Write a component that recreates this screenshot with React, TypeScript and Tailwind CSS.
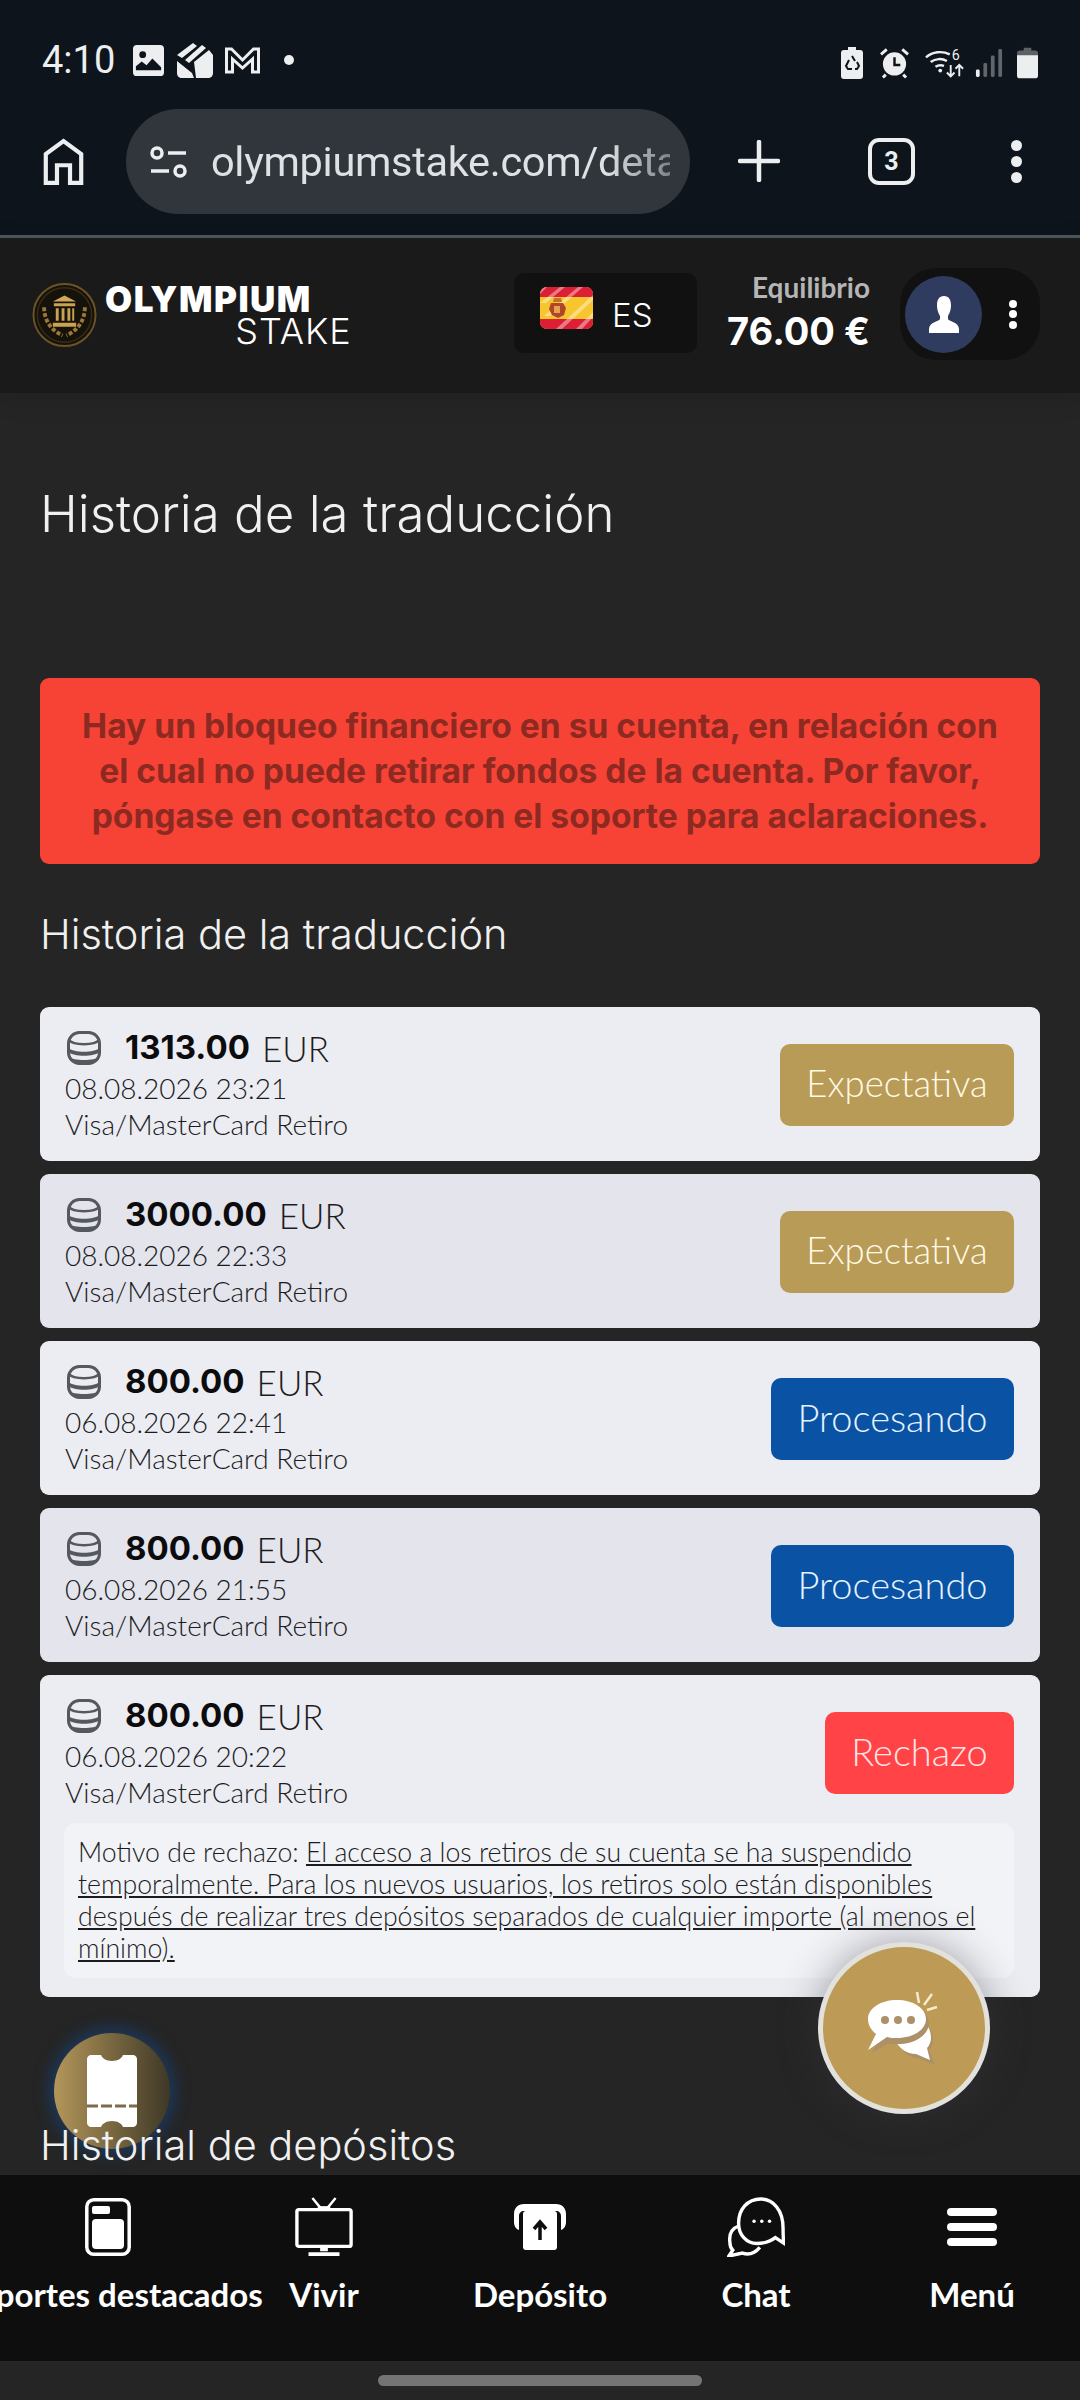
const INTER = "font-['Inter',sans-serif]";

type Withdrawal = {
  amount: string;
  date: string;
  status: string;
  statusClass: string;
  striped?: boolean;
  reason?: string;
};

const pending = "w-[234px] bg-[#b99b58] text-[36.5px] text-[#fff9e6]";
const processing = "w-[243px] bg-[#0a52a3] text-[38px] text-[#e6f2ff]";
const rejected = "w-[189px] bg-[#ff4347] text-[38px] text-[#ffe6e6]";

const withdrawals: Withdrawal[] = [
  { amount: "1313.00", date: "08.08.2026 23:21", status: "Expectativa", statusClass: pending },
  { amount: "3000.00", date: "08.08.2026 22:33", status: "Expectativa", statusClass: pending, striped: true },
  { amount: "800.00", date: "06.08.2026 22:41", status: "Procesando", statusClass: processing },
  { amount: "800.00", date: "06.08.2026 21:55", status: "Procesando", statusClass: processing, striped: true },
  {
    amount: "800.00",
    date: "06.08.2026 20:22",
    status: "Rechazo",
    statusClass: rejected,
    reason:
      "El acceso a los retiros de su cuenta se ha suspendido temporalmente. Para los nuevos usuarios, los retiros solo están disponibles después de realizar tres depósitos separados de cualquier importe (al menos el mínimo).",
  },
];

function CoinsIcon() {
  return (
    <svg viewBox="0 0 34 34" className="h-[34px] w-[34px] text-[#55585e]" fill="none">
      <rect x="1.500" y="1.500" width="31" height="31" rx="11" stroke="currentColor" strokeWidth="3" />
      <path d="M2 9c4 5.500 26 5.500 30 0" stroke="currentColor" strokeWidth="2.500" />
      <path d="M2 17c4 5 26 5 30 0v4c-4 5-26 5-30 0Z" fill="currentColor" />
      <path d="M2 26c4 4 26 4 30 0v2c-3 4-8 5-15 5s-12-1-15-5Z" fill="currentColor" />
    </svg>
  );
}

function HistoryCard({ item }: { item: Withdrawal }) {
  return (
    <div className={`rounded-[9px] pl-[24px] pr-[26px] pt-[20px] pb-[19px] ${item.striped ? "bg-[#e3e4ec]" : "bg-[#ecedf2]"}`}>
      <div className="flex items-center justify-between">
        <div className="ml-[1px] text-[#1c1c1e]">
          <div className="flex h-[42px] items-center">
            <span className="ml-[2px] mr-[24px]">
              <CoinsIcon />
            </span>
            <span className={`text-[33px] font-bold text-[#0c0c0e] ${INTER}`}>{item.amount}</span>
            <span className="ml-[12px] text-[35px] font-light">EUR</span>
          </div>
          <div className="mt-[1px] text-[28px] font-light leading-[36px]">{item.date}</div>
          <div className="text-[28px] font-light leading-[36px]">Visa/MasterCard Retiro</div>
        </div>
        <div className={`flex h-[82px] items-center justify-center rounded-[10px] pb-[2px] font-light ${item.statusClass}`}>
          {item.status}
        </div>
      </div>
      {item.reason && (
        <div className="mt-[13px] rounded-[12px] bg-[#f2f3f7] pl-[14px] pr-[12px] pt-[13px] pb-[14px] text-[26.7px] font-light leading-[32px] text-[#1c1c1e]">
          Motivo de rechazo: <span className="underline">{item.reason}</span>
        </div>
      )}
    </div>
  );
}

function StatusBar() {
  return (
    <div className="flex h-[92px] items-end justify-between pb-[13px] pl-[42px] pr-[42px] text-[#eceef0]">
      <div className="flex items-center">
        <span className="text-[38px] leading-none font-['Roboto',sans-serif]">4:10</span>
        {/* notification icons */}
        <svg viewBox="0 0 32 32" className="ml-[18px] h-[31px] w-[31px]">
          <rect width="32" height="32" rx="4" fill="currentColor" />
          <circle cx="10" cy="10" r="3.500" fill="#0d141b" />
          <path d="M3 26v-4l6-5 5 4 6-7 9 9v3Z" fill="#0d141b" />
        </svg>
        <svg viewBox="0 0 36 36" className="ml-[13px] h-[36px] w-[36px]">
          <path d="M0 13 16 1l4 3L5 16Zm8 5L25 3l4 3L12 21Zm9 2L32 8l4 5v18c0 3-2 5-5 5H19Zm-17-1 15 12 2 5H5c-3 0-5-2-5-5Z" fill="currentColor" />
        </svg>
        <svg viewBox="0 0 36 28" className="ml-[11px] h-[28px] w-[37px]" fill="none" stroke="currentColor" strokeWidth="3">
          <path d="M2 26V3h5l11 11L29 3h5v23h-6V13L18 22 8 13v13Z" />
        </svg>
        <span className="ml-[23px] h-[10px] w-[10px] rounded-full bg-current" />
      </div>
      <div className="flex items-center">
        <svg viewBox="0 0 22 32" className="h-[32px] w-[22px]">
          <path d="M7 0h8v3h4a3 3 0 0 1 3 3v23a3 3 0 0 1-3 3H3a3 3 0 0 1-3-3V6a3 3 0 0 1 3-3h4Z" fill="currentColor" />
          <path d="M11 9l3 5M8 13l-3 6 2 3h4M14 22h2l2-3-2-4" stroke="#0d141b" strokeWidth="2" fill="none" />
        </svg>
        <svg viewBox="0 0 30 32" className="ml-[17px] h-[32px] w-[29px]">
          <circle cx="15" cy="17" r="12" fill="currentColor" />
          <path d="M15 10v8h6" stroke="#0d141b" strokeWidth="2.500" fill="none" />
          <path d="M1 7l6-5M29 7l-6-5M6 28l-3 3M24 28l3 3" stroke="currentColor" strokeWidth="3" />
        </svg>
        <svg viewBox="0 0 42 32" className="ml-[16px] h-[32px] w-[40px]" fill="none" stroke="currentColor" strokeWidth="2.500">
          <path d="M1 10c7-6 17-7 25-3M6 15c5-4 12-4 17-1M11 20c3-2 6-2 9-1" />
          <circle cx="16" cy="24" r="2" fill="currentColor" stroke="none" />
          <text x="28" y="13" fontSize="15" fill="currentColor" stroke="none" className="font-['Roboto',sans-serif]">6</text>
          <path d="M27 18v12M23 26l4 4 4-4M36 30V18M32 22l4-4 4 4" strokeWidth="2" />
        </svg>
        <svg viewBox="0 0 30 32" className="ml-[10px] h-[32px] w-[28px]">
          <rect x="1" y="23" width="4" height="8" rx="1.500" fill="#eceef0" />
          <rect x="9" y="16" width="4" height="15" rx="1.500" fill="#60666b" />
          <rect x="17" y="8" width="4" height="23" rx="1.500" fill="#60666b" />
          <rect x="25" y="1" width="4" height="30" rx="1.500" fill="#60666b" />
        </svg>
        <svg viewBox="0 0 22 32" className="ml-[14px] h-[32px] w-[21px]">
          <path d="M7 0h8v3h4a3 3 0 0 1 3 3v4H0V6a3 3 0 0 1 3-3h4Z" fill="#5d6266" />
          <path d="M0 8h22v21a3 3 0 0 1-3 3H3a3 3 0 0 1-3-3Z" fill="currentColor" />
        </svg>
      </div>
    </div>
  );
}

function BrowserBar() {
  return (
    <div className="flex h-[143px] items-start pt-[17px] text-[#eceef0]">
      <svg viewBox="0 0 44 50" className="ml-[43px] mt-[29px] h-[47px] w-[41px]" fill="none" stroke="currentColor" strokeWidth="4.500">
        <path d="M3 48V17L22 3l19 14v31H29V29H15v19Z" />
      </svg>
      <div className="ml-[42px] flex h-[105px] w-[564px] items-center rounded-full bg-[#30363c] pl-[24px]">
        <svg viewBox="0 0 37 32" className="h-[32px] w-[37px] shrink-0" fill="none" stroke="currentColor" strokeWidth="3.500">
          <circle cx="7" cy="7" r="5" />
          <path d="M18 7h18M1 25h18" />
          <circle cx="30" cy="25" r="5" />
        </svg>
        <div className="ml-[24px] w-[459px] overflow-hidden whitespace-nowrap text-[41.5px] tracking-[-0.3px] font-['Roboto',sans-serif] leading-[50px] text-[#dfe2e4] [mask-image:linear-gradient(90deg,#000_86%,rgba(0,0,0,0.45))]">
          olympiumstake.com/details
        </div>
      </div>
      <svg viewBox="0 0 42 42" className="ml-[48px] mt-[31px] h-[42px] w-[42px]" stroke="currentColor" strokeWidth="4.500" strokeLinecap="round">
        <path d="M21 2v38M2 21h38" />
      </svg>
      <div className="ml-[88px] mt-[29px] flex h-[47px] w-[47px] items-center justify-center rounded-[11px] border-[4px] border-[#eceef0] text-[25px] font-bold font-['Roboto',sans-serif]">
        3
      </div>
      <div className="ml-[96px] mt-[31px] flex h-[43px] flex-col justify-between">
        <span className="h-[11px] w-[11px] rounded-full bg-current" />
        <span className="h-[11px] w-[11px] rounded-full bg-current" />
        <span className="h-[11px] w-[11px] rounded-full bg-current" />
      </div>
    </div>
  );
}

function SpainFlag() {
  return (
    <svg viewBox="0 0 53 42" className="h-[42px] w-[53px] rounded-[7px]">
      <rect width="53" height="42" fill="#f7c52e" />
      <rect width="53" height="10" fill="#dc1f35" />
      <rect y="32" width="53" height="10" fill="#dc1f35" />
      {/* glossy diagonal sheen over the stripes */}
      <g fill="#ffffff" opacity="0.4">
        <path d="M2 0h5L0 7V2ZM20 0h5L6 16H0ZM38 0h5L10 29H4ZM53 8v5L22 42h-6ZM53 25v5L42 42h-6Z" />
      </g>
      <g fill="#b0452a">
        <path d="M11 16h12l3 5-2 7-6 3-6-3-3-6Z" />
      </g>
      <path d="M14 11h7l1 4H13Z" fill="#c9702f" />
      <path d="M14 19h6v7h-6Z" fill="#e7a24d" />
    </svg>
  );
}

function SiteHeader() {
  return (
    <div className="relative flex h-[158px] items-start justify-between border-t-[3px] border-[#4b5358] bg-[#1a1a1a] pl-[32px] pr-[40px] text-white shadow-[0_6px_24px_rgba(0,0,0,0.12)]">
      <div className="mt-[45px] flex">
        <svg viewBox="0 0 66 66" className="h-[64px] w-[65px]">
          <circle cx="33" cy="33" r="32" fill="#15110b" stroke="#6c5326" strokeWidth="2" />
          <circle cx="33" cy="33" r="28" fill="none" stroke="#3a2c14" strokeWidth="1.500" />
          <path d="M21 19l12-6 12 6Z" fill="#d0a957" />
          <path d="M22 21h22v3H22ZM24 26h3v13h-3ZM30 26h3v13h-3ZM36 26h3v13h-3ZM41 26h2v13h-2ZM21 41h24v4H21Z" fill="#c9a252" />
          <path d="M12 25c0 13 7 24 19 29M54 25c0 13-7 24-19 29" stroke="#9a7937" strokeWidth="4" fill="none" strokeDasharray="4 2" />
        </svg>
        <div className="ml-[8px] mt-[-3px]">
          <div className={`text-[35px] font-black leading-[38px] tracking-[1.5px] ${INTER}`}>OLYMPIUM</div>
          <div className={`mr-[-40px] mt-[-6px] text-right text-[36px] font-light leading-[38px] tracking-[1px] ${INTER}`}>STAKE</div>
        </div>
      </div>
      <div className="flex">
        <div className="mt-[35px] flex h-[80px] w-[183px] items-start rounded-[10px] bg-[#111111] pl-[26px] pt-[14px]">
          <SpainFlag />
          <span className={`ml-[19px] mt-[14px] text-[33px] font-light leading-[28px] ${INTER}`}>ES</span>
        </div>
        <div className="ml-[28px] mt-[33px] w-[145px] text-right">
          <div className="text-[28px] font-bold leading-[32px] text-[#b5b5b5]">Equilibrio</div>
          <div className={`mt-[7px] whitespace-nowrap text-[38px] font-bold leading-[42px] ${INTER}`}>76.00 €</div>
        </div>
        <div className="ml-[30px] mt-[30px] flex h-[92px] w-[140px] items-center rounded-[36px] bg-[#111111] pl-[5px]">
          <div className="flex h-[77px] w-[77px] items-center justify-center rounded-full bg-[#2f3c60]">
            <svg viewBox="0 0 30 37" className="h-[37px] w-[30px] fill-white">
              <path d="M15 0c5 0 7 4 7 9 0 6-2 9-3 11v3c0 2 11 3 11 10v4H0v-4c0-7 11-8 11-10v-3c-1-2-3-5-3-11 0-5 2-9 7-9Z" />
            </svg>
          </div>
          <div className="ml-[27px] flex h-[29px] flex-col justify-between">
            <span className="h-[8px] w-[8px] rounded-full bg-white" />
            <span className="h-[8px] w-[8px] rounded-full bg-white" />
            <span className="h-[8px] w-[8px] rounded-full bg-white" />
          </div>
        </div>
      </div>
    </div>
  );
}

type NavItem = { label: string; icon: React.ReactNode };

const navItems: NavItem[] = [
  {
    label: "Deportes destacados",
    icon: (
      <svg viewBox="0 0 46 58" className="h-[58px] w-[46px]" fill="none">
        <rect x="1.800" y="1.800" width="42.400" height="54.400" rx="7" stroke="white" strokeWidth="3.500" />
        <rect x="7" y="8" width="18" height="8" rx="2" fill="white" />
        <rect x="7" y="21" width="32" height="30" rx="4" fill="white" />
      </svg>
    ),
  },
  {
    label: "Vivir",
    icon: (
      <svg viewBox="0 0 60 62" className="h-[60px] w-[60px]" fill="none" stroke="white">
        <path d="M18 1l9 11M42 1l-9 11" strokeWidth="2.500" />
        <rect x="2" y="13" width="56" height="38" rx="2" strokeWidth="3.500" />
        <path d="M24 10h12v3H24Z" fill="white" strokeWidth="1" />
        <path d="M26 51h8v5h-8ZM14 57h32v4H14Z" fill="white" stroke="none" />
      </svg>
    ),
  },
  {
    label: "Depósito",
    icon: (
      <svg viewBox="0 0 52 46" className="h-[46px] w-[52px]">
        <path d="M10 0h32c6 0 10 4 10 10v8c0 4-2 7-5 8V12c0-3-2-5-5-5H10c-3 0-5 2-5 5v14c-3-1-5-4-5-8v-8C0 4 4 0 10 0Z" fill="white" />
        <rect x="9" y="7" width="34" height="39" rx="3" fill="white" />
        <path d="M26 36V19M20 25l6-7 6 7" stroke="#0e0e0e" strokeWidth="3.500" fill="none" />
      </svg>
    ),
  },
  {
    label: "Chat",
    icon: (
      <svg viewBox="0 0 60 62" className="h-[60px] w-[58px]" fill="none" stroke="white" strokeWidth="3.500">
        <path d="M59 48c-1-4-1-8-1-16C58 14 48 2 35 2 21 2 12 13 12 27c0 12 8 21 19 21 7 0 14-2 19-6Z" />
        <path d="M12 30C4 33 2 40 3 47c0 4 2 7 3 8l-4 6 14-3c6 2 12 1 18-6" />
        <circle cx="28" cy="25" r="1.800" fill="white" stroke="none" />
        <circle cx="36" cy="25" r="1.800" fill="white" stroke="none" />
        <circle cx="44" cy="25" r="1.800" fill="white" stroke="none" />
      </svg>
    ),
  },
  {
    label: "Menú",
    icon: (
      <div className="flex h-[38px] w-[50px] flex-col justify-between">
        <span className="h-[8px] rounded-full bg-white" />
        <span className="h-[8px] rounded-full bg-white" />
        <span className="h-[8px] rounded-full bg-white" />
      </div>
    ),
  },
];

function BottomNav() {
  return (
    <div className="absolute inset-x-0 bottom-0 z-20">
      <div className="flex h-[186px] bg-[#0e0e0e] text-white">
        {navItems.map((item) => (
          <div key={item.label} className="flex w-[216px] flex-col items-center pt-[21px]">
            <div className="flex h-[62px] items-center justify-center">{item.icon}</div>
            <div className="mt-[18px] whitespace-nowrap text-[33px] font-bold leading-[36px]">{item.label}</div>
          </div>
        ))}
      </div>
      <div className="flex h-[39px] items-start justify-center bg-[#252525] pt-[14px]">
        <div className="h-[11px] w-[324px] rounded-full bg-[#747474]" />
      </div>
    </div>
  );
}

function FloatingButtons() {
  return (
    <>
      {/* chat bubble */}
      <div className="absolute left-[818px] top-[1942px] z-20 flex h-[172px] w-[172px] items-center justify-center rounded-full border-[5px] border-[#e3e1dc] bg-[#bd9b57] shadow-[0_0_40px_rgba(60,60,70,0.45)]">
        <svg viewBox="0 0 72 74" className="h-[74px] w-[72px]">
          <path d="M29 50c12 2 24-1 33-12 2 3 3 7 3 11 0 4-2 8-4 10l6 15-17-7c-9 0-18-8-21-17Z" fill="#ab9068" />
          <path d="M27 48c12 2 24-1 33-12 2 3 3 7 3 11 0 4-2 8-4 10l3 12-14-6c-9 0-18-6-21-15Z" fill="white" />
          <path d="M32 14c16 0 29 7 29 18s-13 21-29 21c-4 0-9 0-13 0L4 62l8-15C6 43 3 38 3 32c0-11 13-18 29-18Z" fill="#ab9068" />
          <path d="M29 9c16 0 29 8 29 19S45 47 29 47c-4 0-7 0-10-1L0 59l8-16C3 39 0 34 0 28 0 17 13 9 29 9Z" fill="white" />
          <circle cx="17" cy="29" r="4" fill="#ab9068" />
          <circle cx="30" cy="29" r="4" fill="#ab9068" />
          <circle cx="43" cy="29" r="4" fill="#ab9068" />
          <path d="M49 1l2 11M64 3l-8 11M69 16l-10 3" stroke="#f5eccb" strokeWidth="2.500" fill="none" />
        </svg>
      </div>
      {/* coupon */}
      <div className="absolute left-[54px] top-[2033px] flex h-[116px] w-[116px] items-center justify-center rounded-full bg-[linear-gradient(90deg,#b3965a,#3e3827)] shadow-[0_0_14px_6px_rgba(20,70,130,0.55)]">
        <svg viewBox="0 0 50 72" className="h-[72px] w-[50px]">
          <path d="M4 0h10c1 3 5 6 11 6s10-3 11-6h10c2 0 4 2 4 4v64c0 2-2 4-4 4H36c-1-3-5-6-11-6s-10 3-11 6H4c-2 0-4-2-4-4V4c0-2 2-4 4-4Z" fill="white" />
          <path d="M0 51h50" stroke="#7d6c4a" strokeWidth="3" strokeDasharray="11 3" />
        </svg>
      </div>
    </>
  );
}

export default function App() {
  return (
    <div className="relative h-[2400px] w-[1080px] overflow-hidden bg-[#252525] font-['Lato','Noto_Sans',sans-serif]">
      <div className="bg-[#0d141b]">
        <StatusBar />
        <BrowserBar />
      </div>
      <SiteHeader />
      <main className="px-[40px]">
        <h1 className={`mt-[91px] text-[51px] font-light leading-[60px] text-[#f0f0f0] ${INTER}`}>Historia de la traducción</h1>
        <div className={`mt-[134px] rounded-[9px] bg-[#f74336] px-[30px] pt-[25px] pb-[26px] text-center text-[33.6px] font-bold leading-[45px] text-[#8c2a22] ${INTER}`}>
          Hay un bloqueo financiero en su cuenta, en relación con el cual no puede retirar fondos de la cuenta. Por favor, póngase en contacto con el soporte para aclaraciones.
        </div>
        <h2 className={`mt-[45px] text-[41.5px] font-light leading-[50px] text-[#f0f0f0] ${INTER}`}>Historia de la traducción</h2>
        <div className="mt-[48px] flex flex-col gap-[13px]">
          {withdrawals.map((item) => (
            <HistoryCard key={item.date} item={item} />
          ))}
        </div>
        <h2 className={`relative z-10 mt-[123px] text-[41.5px] font-light leading-[50px] text-[#f0f0f0] ${INTER}`}>Historial de depósitos</h2>
      </main>
      <FloatingButtons />
      <BottomNav />
    </div>
  );
}
